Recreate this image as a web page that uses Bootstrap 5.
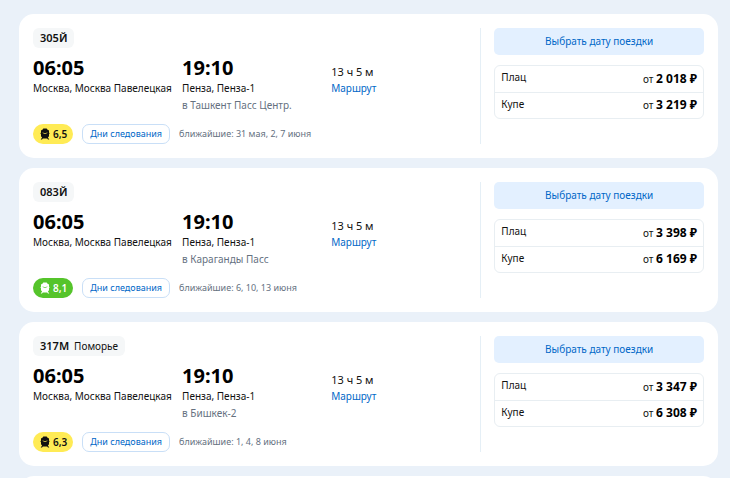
<!DOCTYPE html>
<html lang="ru">
<head>
<meta charset="utf-8">
<meta name="viewport" content="width=device-width, initial-scale=1">
<title>Москва — Пенза</title>
<link href="https://cdn.jsdelivr.net/npm/bootstrap@5.3.0/dist/css/bootstrap.min.css" rel="stylesheet">
<style>
  body { background: #eaf1f9; color: #111; font-family: "Noto Sans", sans-serif; font-size: 10px; line-height: 17px; }
  a { color: #0067c7; }
  .trip-list { height: 100vh; padding: 14px 12px 0 19px; }
  .trip { background: #fff; border-radius: 15px; padding: 14px; margin-bottom: 10px; min-height: 144px; }
  .train-no { background: #f5f7f8; border-radius: 6px; padding: 0 7px; height: 20px; line-height: 20px; font-size: 11px; margin-bottom: 7px; }
  .train-no strong { font-weight: 600; }
  .train-name { font-size: 10px; margin-left: 5px; }
  .clock { font-size: 20px; font-weight: 700; line-height: 25px; color: #000; }
  .duration { padding-top: 8px; font-size: 11px; }
  .duration a { font-size: 10px; }
  .muted { color: #65717f; }
  .extras { margin-top: 10px; gap: 9px; font-size: 9px; line-height: 18px; }
  .rating { background: #ffeb55; border-radius: 10px; height: 20px; padding: 0 6px; gap: 2px; font-size: 10px; font-weight: 600; color: #111; }
  .rating-good { background: #55c42b; color: #fff; }
  .days { border: 1px solid #c9dff7; border-radius: 7px; background: #fff; color: #0067c7; padding: 0 7px; height: 20px; line-height: 18px; }
  .offers { border-left: 1px solid #e5eff6; padding-left: 13px; }
  .pick { background: #e3f0ff; color: #0067c7; border: 0; border-radius: 5px; height: 27px; margin-bottom: 10px; }
  .prices { border: 1px solid #e8eef2; border-radius: 6px; }
  .prices td, .prices th { height: 26px; padding: 0 6px; font-weight: 400; }
  .prices th { padding-bottom: 2px; }
  .prices tr + tr > * { border-top: 1px solid #e8eef2; }
  .prices strong { font-size: 12px; font-weight: 700; color: #000; }
</style>
<script src="https://cdn.jsdelivr.net/npm/bootstrap@5.3.0/dist/js/bootstrap.bundle.min.js"></script>
</head>
<body>
<svg class="d-none" aria-hidden="true">
  <symbol id="train" viewBox="0 0 12 12">
    <path fill="currentColor" fill-rule="evenodd" d="M4.300 .5h3.400l.6 1 1.700 1.100v1.900l.6.900-.6.900v1.900L8.900 9.400l1.400 2H9l-.8-1H3.800l-.8 1H1.700l1.400-2L2 8.200V6.300l-.6-.9.600-.9V2.600l1.700-1.100zM3.600 4.500v.6L6 6l2.400-.9v-.6L6 5.300z"/>
  </symbol>
</svg>
<main class="trip-list overflow-hidden">
  <article class="trip">
    <div class="row g-0">
      <div class="col-8">
        <div class="train-no d-inline-block align-top"><strong>305Й</strong></div>
        <div class="row row-cols-3 g-0 text-nowrap">
          <div><div class="clock">06:05</div><div>Москва, Москва Павелецкая</div></div>
          <div><div class="clock">19:10</div><div>Пенза, Пенза-1</div><div class="muted">в Ташкент Пасс Центр.</div></div>
          <div class="duration"><div>13 ч 5 м</div><a class="text-decoration-none d-block" href="#">Маршрут</a></div>
        </div>
        <div class="extras d-flex align-items-center">
          <span class="rating d-flex align-items-center"><svg width="12" height="12"><use href="#train"/></svg>6,5</span>
          <button type="button" class="days">Дни следования</button>
          <span class="muted">ближайшие: 31 мая, 2, 7 июня</span>
        </div>
      </div>
      <div class="offers col-4">
        <button type="button" class="pick w-100 d-block">Выбрать дату поездки</button>
        <div class="prices"><table class="w-100">
          <tr><th scope="row">Плац</th><td class="text-end">от <strong>2 018 ₽</strong></td></tr>
          <tr><th scope="row">Купе</th><td class="text-end">от <strong>3 219 ₽</strong></td></tr>
        </table></div>
      </div>
    </div>
  </article>
  <article class="trip">
    <div class="row g-0">
      <div class="col-8">
        <div class="train-no d-inline-block align-top"><strong>083Й</strong></div>
        <div class="row row-cols-3 g-0 text-nowrap">
          <div><div class="clock">06:05</div><div>Москва, Москва Павелецкая</div></div>
          <div><div class="clock">19:10</div><div>Пенза, Пенза-1</div><div class="muted">в Караганды Пасс</div></div>
          <div class="duration"><div>13 ч 5 м</div><a class="text-decoration-none d-block" href="#">Маршрут</a></div>
        </div>
        <div class="extras d-flex align-items-center">
          <span class="rating rating-good d-flex align-items-center"><svg width="12" height="12"><use href="#train"/></svg>8,1</span>
          <button type="button" class="days">Дни следования</button>
          <span class="muted">ближайшие: 6, 10, 13 июня</span>
        </div>
      </div>
      <div class="offers col-4">
        <button type="button" class="pick w-100 d-block">Выбрать дату поездки</button>
        <div class="prices"><table class="w-100">
          <tr><th scope="row">Плац</th><td class="text-end">от <strong>3 398 ₽</strong></td></tr>
          <tr><th scope="row">Купе</th><td class="text-end">от <strong>6 169 ₽</strong></td></tr>
        </table></div>
      </div>
    </div>
  </article>
  <article class="trip">
    <div class="row g-0">
      <div class="col-8">
        <div class="train-no d-inline-block align-top"><strong>317М</strong><span class="train-name">Поморье</span></div>
        <div class="row row-cols-3 g-0 text-nowrap">
          <div><div class="clock">06:05</div><div>Москва, Москва Павелецкая</div></div>
          <div><div class="clock">19:10</div><div>Пенза, Пенза-1</div><div class="muted">в Бишкек-2</div></div>
          <div class="duration"><div>13 ч 5 м</div><a class="text-decoration-none d-block" href="#">Маршрут</a></div>
        </div>
        <div class="extras d-flex align-items-center">
          <span class="rating d-flex align-items-center"><svg width="12" height="12"><use href="#train"/></svg>6,3</span>
          <button type="button" class="days">Дни следования</button>
          <span class="muted">ближайшие: 1, 4, 8 июня</span>
        </div>
      </div>
      <div class="offers col-4">
        <button type="button" class="pick w-100 d-block">Выбрать дату поездки</button>
        <div class="prices"><table class="w-100">
          <tr><th scope="row">Плац</th><td class="text-end">от <strong>3 347 ₽</strong></td></tr>
          <tr><th scope="row">Купе</th><td class="text-end">от <strong>6 308 ₽</strong></td></tr>
        </table></div>
      </div>
    </div>
  </article>
  <article class="trip"></article>
</main>
</body>
</html>
